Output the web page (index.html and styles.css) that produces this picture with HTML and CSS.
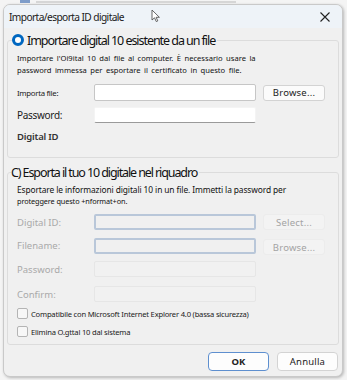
FILE: index.html
```html
<!DOCTYPE html>
<html lang="it">
<head>
  <meta charset="UTF-8">
  <title>Importa/esporta ID digitale</title>
  <link rel="stylesheet" href="styles.css">
</head>
<body>

<!-- window behind the dialog, only its bottom edge shows -->
<div class="backdrop">
  <span class="backdrop-box"></span>
  <span class="backdrop-line"></span>
</div>

<div class="dialog">
  <div class="titlebar">
    <span class="title">Importa/esporta ID digitale</span>
    <svg class="close" width="12" height="12" viewBox="0 0 12 12">
      <path d="M1.5 1.5 L10.5 10.5 M10.5 1.5 L1.5 10.5" stroke="#222" stroke-width="1.1" fill="none"/>
    </svg>
    <svg class="cursor" width="10" height="14" viewBox="0 0 10 14">
      <path d="M1 1 L1 11 L3.5 8.8 L5.3 12.6 L6.8 11.9 L5.1 8.3 L8.4 8.3 Z" fill="#fff" stroke="#555" stroke-width="0.9" stroke-linejoin="round"/>
    </svg>
  </div>

  <div class="body">
    <!-- Import section -->
    <fieldset class="group group-import">
      <legend class="group-title">
        <span class="radio"></span>
        Importare digital 10 esistente da un file
      </legend>
      <p class="desc">Importare l'Oi9ital 10 dal file al computer. È necessario usare la<br>password immessa per esportare il certificato in questo file.</p>

      <div class="fields">
        <label class="lbl lbl-small" for="import_file">Importa file:</label>
        <input class="field" type="text" id="import_file">
        <button class="btn" type="button">Browse...</button>

        <label class="lbl" for="import_pwd">Password:</label>
        <input class="field field-line" type="password" id="import_pwd">
        <span></span>
      </div>
      <div class="subhead">Digital ID</div>
    </fieldset>

    <!-- Export section -->
    <fieldset class="group group-export">
      <legend class="group-title group-title-export">C) Esporta il tuo 10 digitale nel riquadro</legend>
      <p class="desc desc-export">Esportare le informazioni digitali 10 in un file. Immetti la password per<br><span class="desc-tiny">proteggere questo +nformat+on.</span></p>

      <div class="fields fields-off">
        <label class="lbl">Digital ID:</label>
        <input class="field field-off" type="text" disabled>
        <button class="btn btn-off" type="button" disabled>Select...</button>

        <label class="lbl">Filename:</label>
        <input class="field field-off" type="text" disabled>
        <button class="btn btn-off btn-low" type="button" disabled>Browse...</button>

        <label class="lbl">Password:</label>
        <input class="field field-faint" type="password" disabled>
        <span></span>

        <label class="lbl lbl-confirm">Confirm:</label>
        <input class="field field-faint field-confirm" type="password" disabled>
        <span></span>
      </div>

      <label class="check check-first"><span class="box"></span>Compatibile con Microsoft Internet Explorer 4.0 (bassa sicurezza)</label>
      <label class="check check-last"><span class="box"></span>Elimina O.gttal 10 dal sistema</label>
    </fieldset>

    <div class="footer">
      <button class="btn btn-foot btn-ok" type="button">OK</button>
      <button class="btn btn-foot" type="button">Annulla</button>
    </div>
  </div>
</div>

</body>
</html>
```

FILE: styles.css
```css
/* General */
body {
  margin: 0;
  width: 347px;
  height: 380px;
  overflow: hidden;
  background-color: #f4f4f4;
  font-family: 'Noto Sans', 'Liberation Sans', sans-serif;
  color: #1b1b1b;
}

/* Window behind the dialog */
.backdrop {
  height: 4px;
  overflow: hidden;
  display: flex;
  align-items: flex-start;
  gap: 6px;
  padding-left: 20px;
}

.backdrop-box {
  width: 10px;
  height: 3px;
  background-color: #7d9cc9;
}

.backdrop-line {
  width: 200px;
  height: 2px;
  margin-top: 1px;
  background-color: #d6d6d6;
}

/* Dialog frame */
.dialog {
  margin-left: 3px;
  width: 338px;
  height: 371px;
  border: 1px solid #c9c9c9;
  border-radius: 7px;
  overflow: hidden;
  background-color: #f0f0f0;
  box-shadow: 1px 1px 3px rgba(0, 0, 0, 0.25);
}

.titlebar {
  position: relative;
  height: 23px;
  display: flex;
  align-items: center;
  justify-content: space-between;
  padding: 0 11px 0 5px;
  background-color: #eef3f8;
}

.title {
  font-size: 10.2px;
  color: #1a1a1a;
  letter-spacing: -0.6px;
  margin-top: 1px;
}

.close {
  margin-top: 1px;
}

/* mouse pointer sitting over the title bar */
.cursor {
  position: absolute;
  left: 147px;
  top: 4px;
}

.body {
  padding: 2px 3px 0 3px;
}

/* Group boxes */
.group {
  margin: 0;
  padding: 0 8px 0 9px;
  border: 1px solid #dcdcdc;
  border-radius: 3px;
}

.group-export {
  margin-top: 4px;
}

.group-title {
  display: flex;
  align-items: center;
  gap: 3px;
  height: 20px;
  padding: 0 2px 0 0;
  margin-left: -5px;
  font-size: 12.5px;
  color: #111;
  letter-spacing: -1.05px;
  background-color: #f0f0f0;
}

.group-title-export {
  margin-left: -6px;
  letter-spacing: -1.1px;
}

.radio {
  width: 6px;
  height: 6px;
  border: 3px solid #0067c0;
  border-radius: 50%;
  background-color: #fff;
}

.desc {
  margin: 2px 0 0 0;
  font-size: 7.6px;
  line-height: 12px;
  word-spacing: 1.5px;
  color: #111;
}

.desc-export {
  margin-top: 2px;
  font-size: 8.4px;
  line-height: 11px;
  word-spacing: 0;
  letter-spacing: -0.1px;
}

.desc-tiny {
  font-size: 7.3px;
  line-height: 10px;
}

/* Field grid */
.fields {
  display: grid;
  grid-template-columns: 70px 162px 62px;
  column-gap: 7px;
  row-gap: 6px;
  align-items: center;
  margin-top: 8px;
}

.fields-off {
  margin-top: 8px;
}

.lbl {
  font-size: 10px;
  color: #1b1b1b;
  letter-spacing: -0.3px;
}

.lbl-small {
  font-size: 7.8px;
}

.fields-off .lbl {
  color: #a9a9a9;
  font-size: 9.5px;
  letter-spacing: 0;
}

.field {
  box-sizing: border-box;
  width: 162px;
  height: 17px;
  margin: 0;
  border: 1px solid #c6c6c6;
  border-radius: 2px;
  background-color: #fff;
}

.field-line {
  height: 16px;
  border-color: #f4f4f4;
  border-bottom: 1px solid #9a9a9a;
}

.field-off {
  height: 16px;
  border: 2px solid #b9c7d9;
  border-radius: 2px;
  background-color: #f0f0f0;
}

.field-faint {
  height: 16px;
  border: 1px solid #e6e6e6;
  background-color: #f1f1f1;
}

.lbl-confirm,
.field-confirm {
  margin-top: 3px;
}

.subhead {
  margin: 7px 0 13px 0;
  height: 14px;
  line-height: 14px;
  font-size: 9.5px;
  font-weight: 600;
  color: #333;
  letter-spacing: -0.2px;
}

/* Buttons */
.btn {
  box-sizing: border-box;
  width: 62px;
  height: 16px;
  padding: 0;
  border: 1px solid #d3d3d3;
  border-radius: 3px;
  background-color: #fbfbfb;
  font-family: 'Noto Sans', 'Liberation Sans', sans-serif;
  font-size: 9.5px;
  color: #222;
  letter-spacing: 0.2px;
}

.btn-off {
  border-color: #ececec;
  background-color: #f3f3f3;
  color: #a3a3a3;
}

.btn-low {
  margin-top: 3px;
}

/* Checkboxes */
.check {
  display: flex;
  align-items: center;
  gap: 3px;
  height: 11px;
  margin-bottom: 7px;
  font-size: 7.6px;
  color: #1b1b1b;
  letter-spacing: -0.2px;
}

.check-first {
  margin-top: 6px;
}

.check-last {
  margin-bottom: 7px;
}

.box {
  box-sizing: border-box;
  width: 11px;
  height: 11px;
  border: 1px solid #b4b4b4;
  border-radius: 2px;
  background-color: #f7f7f7;
}

/* Footer */
.footer {
  display: flex;
  justify-content: flex-end;
  gap: 8px;
  padding: 7px 1px 0 0;
}

.btn-foot {
  width: 61px;
  height: 19px;
  border-radius: 4px;
  background-color: #fdfdfd;
  font-size: 9.5px;
}

.btn-ok {
  border: 1px solid #5e8fcf;
  font-weight: 700;
}
```
